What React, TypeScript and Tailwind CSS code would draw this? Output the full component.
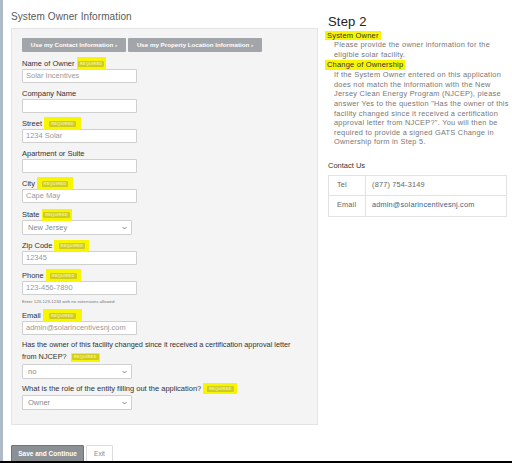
import React from "react";

function Req({ className = "" }: { className?: string }) {
  return (
    <span className={`ml-[2px] inline-flex items-center justify-center bg-[#f8f500] ${className}`}>
      <span className="rounded-[1px] bg-[#cfcc1c] px-[2px] text-[4px] font-bold leading-[6px] tracking-[0.2px] text-[#f4f1a0]">
        REQUIRED
      </span>
    </span>
  );
}

function Label({ children, className = "" }: { children: React.ReactNode; className?: string }) {
  return <div className={`flex h-[11px] items-center text-[7.5px] leading-[11px] text-[#333] ${className}`}>{children}</div>;
}

function Input({ value = "" }: { value?: string }) {
  return (
    <div className="flex h-[14px] w-[115px] items-center rounded-[1px] border border-[#cfcfcf] bg-white px-[3px] text-[7.5px] text-[#9a9a9a]">
      {value}
    </div>
  );
}

function Select({ value }: { value: string }) {
  return (
    <div className="flex h-[15px] w-[110px] items-center justify-between rounded-[1px] border border-[#cfcfcf] bg-white pl-[5px] pr-[4px] text-[7.5px] text-[#8a8a8a]">
      <span>{value}</span>
      <svg width="5" height="4" viewBox="0 0 10 6" fill="none" stroke="#666" strokeWidth="1.6">
        <path d="M1 1l4 4 4-4" />
      </svg>
    </div>
  );
}

export default function App() {
  return (
    <div
      className="flex h-[463px] w-[512px] overflow-hidden border-b-2 border-black bg-white"
      style={{ fontFamily: '"Liberation Sans", Arial, sans-serif' }}
    >
      <div className="w-[3px] shrink-0 bg-[#aebac6]" />

      {/* Left: form */}
      <div className="ml-[8px] w-[307px] shrink-0">
        <div className="mt-[10px] h-[18px] text-[10px] leading-[14px] tracking-[0.1px] text-[#5a5a5a]">
          System Owner Information
        </div>

        <div className="border border-[#e4e4e4] bg-[#f4f4f4] pb-[14px] pl-[10px] pt-[9px]">
          <div className="flex gap-[2px]">
            <div className="flex h-[14px] w-[104px] items-center justify-center rounded-[1px] bg-[#a2a6aa] text-[6.2px] font-bold text-white">
              Use my Contact Information ›
            </div>
            <div className="flex h-[14px] w-[134px] items-center justify-center rounded-[1px] bg-[#a2a6aa] text-[6.2px] font-bold text-white">
              Use my Property Location Information ›
            </div>
          </div>

          <Label className="mt-[6px]">
            Name of Owner <Req className="h-[13px] w-[29px]" />
          </Label>
          <Input value="Solar Incentives" />

          <Label className="mt-[5px]">Company Name</Label>
          <Input />

          <Label className="mt-[5px]">
            Street <Req className="h-[13px] w-[37px]" />
          </Label>
          <Input value="1234 Solar" />

          <Label className="mt-[5px]">Apartment or Suite</Label>
          <Input />

          <Label className="mt-[5px]">
            City <Req className="h-[13px] w-[36px]" />
          </Label>
          <Input value="Cape May" />

          <Label className="mt-[6px]">
            State <Req className="h-[12px] w-[30px]" />
          </Label>
          <Select value="New Jersey" />

          <Label className="mt-[5px]">
            Zip Code <Req className="h-[12px] w-[35px]" />
          </Label>
          <Input value="12345" />

          <Label className="mt-[5px]">
            Phone <Req className="h-[13px] w-[35px]" />
          </Label>
          <Input value="123-456-7890" />
          <div className="mt-[2px] h-[10px] text-[4.4px] leading-[10px] text-[#777]">
            Enter 123-123-1234 with no extensions allowed
          </div>

          <Label className="mt-[3px]">
            Email <Req className="h-[13px] w-[39px]" />
          </Label>
          <Input value="admin@solarincentivesnj.com" />

          <div className="mt-[4px] text-[7.3px] leading-[12px] text-[#333]">
            Has the owner of this facility changed since it received a certification approval letter
            <br />
            from NJCEP? <Req className="h-[9px] w-[29px] align-middle" />
          </div>
          <div className="mt-[1px]">
            <Select value="no" />
          </div>

          <Label className="mt-[4px]">
            What is the role of the entity filling out the application? <Req className="h-[11px] w-[34px]" />
          </Label>
          <div className="mt-[1px]">
            <Select value="Owner" />
          </div>
        </div>

        <div className="mt-[20px] flex gap-[2px]">
          <div className="flex h-[18px] w-[73px] items-center justify-center rounded-[1px] border border-[#6f7479] bg-[#8b9094] text-[6.5px] font-bold text-white">
            Save and Continue
          </div>
          <div className="flex h-[18px] w-[27px] items-center justify-center rounded-[1px] border border-[#dcdcdc] bg-white text-[6.5px] text-[#888]">
            Exit
          </div>
        </div>
      </div>

      {/* Right: help */}
      <div className="ml-[10px] w-[182px] shrink-0 pt-[13px]">
        <div className="h-[18px] text-[13px] leading-[18px] tracking-[0.2px] text-[#222]">Step 2</div>
        <div className="-ml-[3px] w-fit bg-[#f8f500] px-[2px] text-[7.5px] leading-[9px] tracking-[0.2px] text-[#333]">
          System Owner
        </div>
        <p className="whitespace-nowrap pl-[6px] text-[7.4px] leading-[9.6px] tracking-[0.25px] text-[#777]">
          Please provide the owner information for the
          <br />
          eligible solar facility.
        </p>
        <div className="-ml-[3px] mt-[1px] w-fit bg-[#f8f500] px-[2px] text-[7.5px] leading-[10px] tracking-[0.2px] text-[#333]">
          Change of Ownership
        </div>
        <p className="whitespace-nowrap pl-[6px] text-[7.4px] leading-[9.6px] tracking-[0.25px] text-[#777]">
          If the System Owner entered on this application
          <br />
          does not match the information with the New
          <br />
          Jersey Clean Energy Program (NJCEP), please
          <br />
          answer Yes to the question "Has the owner of this
          <br />
          facility changed since it received a certification
          <br />
          approval letter from NJCEP?". You will then be
          <br />
          required to provide a signed GATS Change in
          <br />
          Ownership form in Step 5.
        </p>

        <div className="mt-[14px] text-[7.5px] leading-[10px] text-[#333]">Contact Us</div>
        <div className="mt-[4px] w-[179px] border border-[#e2e2e2] text-[7.3px] tracking-[0.2px]">
          <div className="flex h-[20px] items-center border-b border-[#e2e2e2]">
            <div className="flex h-full w-[37px] items-center border-r border-[#e2e2e2] pl-[8px] text-[#666]">Tel</div>
            <div className="pl-[6px] text-[#666]">(877) 754-3149</div>
          </div>
          <div className="flex h-[20px] items-center">
            <div className="flex h-full w-[37px] items-center border-r border-[#e2e2e2] pl-[8px] text-[#666]">Email</div>
            <div className="pl-[6px] text-[#3a5f8a]">admin@solarincentivesnj.com</div>
          </div>
        </div>
      </div>
    </div>
  );
}
